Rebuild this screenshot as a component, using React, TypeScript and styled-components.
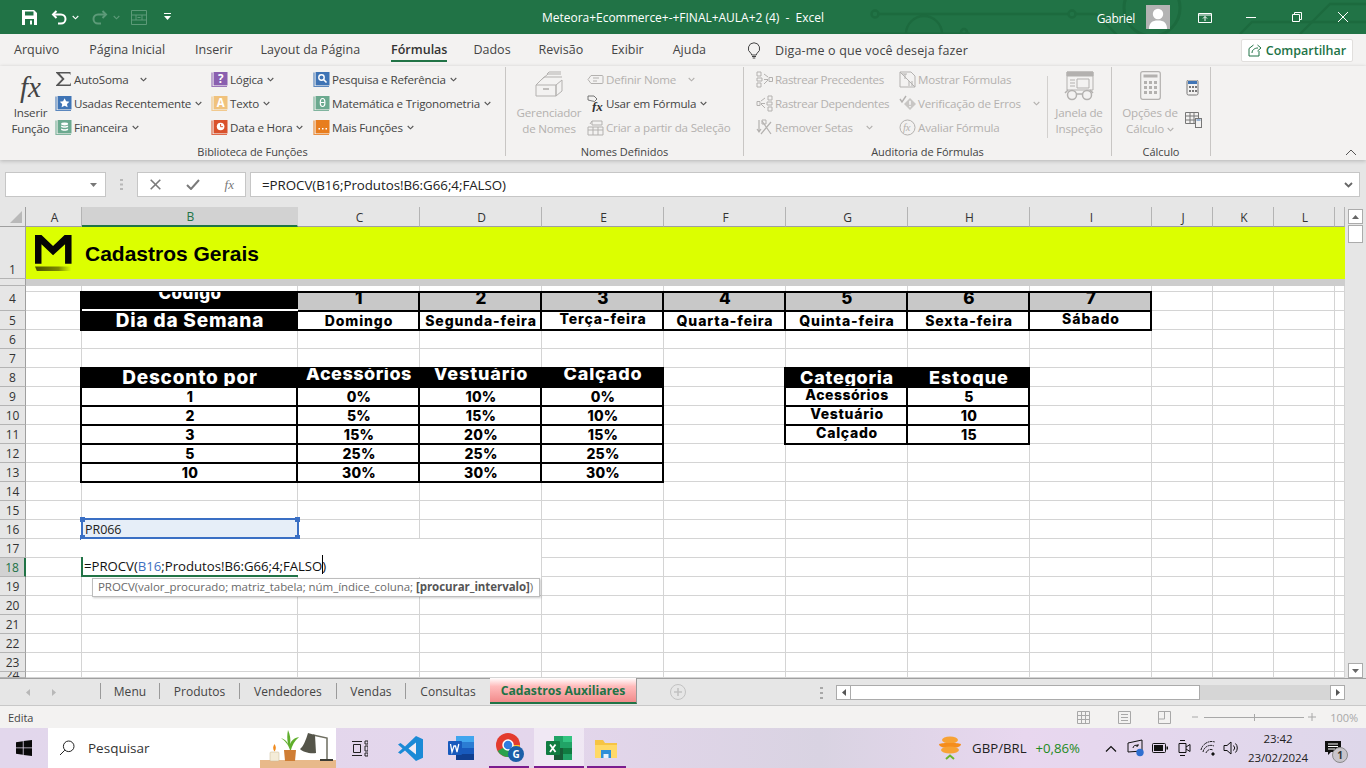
import React from 'react';
import styled, { createGlobalStyle } from 'styled-components';

const UI = `"Open Sans", "Noto Sans", sans-serif`;
const BOLD = `Inter, "Liberation Sans", sans-serif`;
const GRID = '#d4d4d4';
const DIS = '#b3b1af';

const Global = createGlobalStyle`
  *, *::before, *::after { box-sizing: border-box; }
  html, body { margin: 0; padding: 0; width: 1366px; height: 768px; overflow: hidden; background: #fff; }
  svg { display: block; flex: none; }
`;

const Page = styled.div`
  width: 1366px; height: 768px; display: flex; flex-direction: column; overflow: hidden;
  font-family: ${UI}; color: #444; position: relative;
`;

/* ---------- title bar ---------- */
const TitleBar = styled.header`
  height: 34px; flex: none; background: #217346; color: #fff; display: flex; align-items: center;
  position: relative; font-size: 12px; letter-spacing: -0.02px;
`;
const Qat = styled.div`width: 542px; padding-left: 22px; display: flex; align-items: center; flex: none;`;
const QatSlot = styled.span<{ $ml?: number }>`margin-left: ${p => p.$ml ?? 0}px; display: block;`;
const DocTitle = styled.div`white-space: pre; position: relative;`;
const UserArea = styled.div`margin-left: auto; display: flex; align-items: center; position: relative;`;
const UserName = styled.span`margin-right: 11px; padding-top: 2px; letter-spacing: -0.3px;`;
const Avatar = styled.div`width: 24px; height: 24px; background: #b3b3b3; margin-right: 12px; overflow: hidden;`;
const WinBtn = styled.div`width: 46px; height: 34px; display: flex; align-items: center; justify-content: center;`;
const Circuit = styled.svg`position: absolute; left: 860px; top: 0;`;

/* ---------- ribbon ---------- */
const TabRow = styled.nav`
  height: 32px; flex: none; background: #f3f2f1; display: flex; align-items: center; padding: 0 13px 0 14px;
  font-size: 12.5px; color: #444;
`;
const RibbonTab = styled.div<{ $active?: boolean; $mr?: number }>`
  height: 32px; line-height: 31px; margin-right: ${p => p.$mr ?? 30}px; position: relative; white-space: nowrap; flex: none;
  ${p => p.$active ? `
    font-weight: 600; color: #333;
    &::after { content: ''; position: absolute; left: 0; right: 0; bottom: 4px; height: 2px; background: #217346; }
  ` : ''}
`;
const TellMe = styled.div`display: flex; align-items: center; gap: 14px; margin-left: 11px; white-space: nowrap; letter-spacing: .15px;`;
const ShareBtn = styled.div`
  margin-left: auto; width: 112px; height: 23px; background: #fff; border: 1px solid #e1dfdd; border-radius: 2px;
  display: flex; align-items: center; justify-content: center; gap: 4px; color: #217346; font-weight: 600; font-size: 12.5px;
`;
const Ribbon = styled.section`
  height: 94px; flex: none; background: #f3f2f1; display: flex; position: relative; z-index: 2;
  box-shadow: 0 1px 4px rgba(0,0,0,.22); font-size: 11.6px; letter-spacing: -0.2px;
`;
const Group = styled.div<{ $w: number }>`
  width: ${p => p.$w}px; flex: none; height: 89px; margin-top: 1px; display: flex; flex-direction: column;
  border-right: 1px solid #c8c6c4;
`;
const GroupBody = styled.div<{ $pl?: number }>`flex: 1; display: flex; padding-left: ${p => p.$pl ?? 0}px;`;
const GroupLabel = styled.div`height: 11px; text-align: center; font-size: 11px; color: #444; line-height: 13px; letter-spacing: -0.05px;`;
const Col = styled.div<{ $w?: number }>`display: flex; flex-direction: column; width: ${p => p.$w ? `${p.$w}px` : 'auto'}; flex: none;`;
const Small = styled.div<{ $off?: boolean; $tight?: boolean }>`
  height: 24px; display: flex; align-items: center; gap: 2px; white-space: nowrap; color: ${p => p.$off ? DIS : '#444'};
  ${p => p.$tight ? 'letter-spacing: -0.35px;' : ''}
`;
const IconBox = styled.span`width: 17px; height: 18px; display: flex; align-items: center; justify-content: center; flex: none;`;
const ChevWrap = styled.span<{ $ml?: number }>`margin-left: ${p => p.$ml ?? 2}px; display: block;`;
const Large = styled.div<{ $w: number; $off?: boolean }>`
  width: ${p => p.$w}px; flex: none; display: flex; flex-direction: column; align-items: center; text-align: center;
  line-height: 16px; color: ${p => p.$off ? DIS : '#444'};
`;
const LargeIcon = styled.div`height: 38px; padding-top: 4px; display: flex; align-items: flex-start; justify-content: center;`;
const LabelLine = styled.span`display: flex; align-items: center; gap: 3px;`;
const FxGlyph = styled.span`
  font-family: "Liberation Serif", serif; font-style: italic; font-size: 29px; line-height: 32px; color: #444; letter-spacing: 0;
`;
const FxSmall = styled(FxGlyph)`font-size: 13px; line-height: 14px; color: #777;`;
const InnerSep = styled.div`width: 1px; height: 62px; background: #d2d0ce; margin: 9px 0 0 0; flex: none;`;
const Collapse = styled.svg`position: absolute; right: 9px; bottom: 4px;`;
const CalcStack = styled(Col)`padding-top: 13px; gap: 16px;`;

/* ---------- formula bar ---------- */
const FormulaBar = styled.div`
  height: 47px; flex: none; background: #e6e6e6; padding: 12px 6px 10px 5px; display: flex; align-items: stretch;
`;
const Field = styled.div`background: #fff; border: 1px solid #c6c6c6; display: flex; align-items: center;`;
const NameBox = styled(Field)`width: 101px; justify-content: flex-end; padding-right: 8px;`;
const Grip = styled.div`width: 31px; display: flex; align-items: center; justify-content: center;`;
const FxButtons = styled(Field)`width: 109px; justify-content: space-between; padding: 0 11px 0 12px;`;
const Input = styled(Field)`
  flex: 1; margin-left: 4px; padding: 0 6px 0 11px; justify-content: space-between; font-size: 13.35px; color: #222; letter-spacing: -0.05px;
`;

/* ---------- sheet ---------- */
const SheetWrap = styled.main`flex: none; height: 471px; display: flex; background: #e6e6e6;`;
const SheetArea = styled.div`width: 1345px; height: 471px; position: relative; overflow: hidden; flex: none;`;
const TEMPLATE = '26px 56px 216px repeat(7, 122px) repeat(3, 61px) 10px';
const ColHead = styled.div`display: grid; grid-template-columns: ${TEMPLATE}; height: 20px; background: #e6e6e6;`;
const ColCell = styled.div<{ $sel?: boolean }>`
  display: flex; align-items: center; justify-content: center; font-size: 12px; padding: 1px 0 0 2px;
  color: ${p => p.$sel ? '#217346' : '#333'}; background: ${p => p.$sel ? '#d2d2d2' : '#e6e6e6'};
  border-right: 1px solid ${p => p.$sel ? '#d2d2d2' : '#b4b4b4'};
  border-bottom: 1px solid #9f9f9f;
  ${p => p.$sel ? 'border-bottom: 2px solid #217346;' : ''}
`;
const Corner = styled.div`
  background: #e6e6e6; border-right: 1px solid #9f9f9f; border-bottom: 1px solid #9f9f9f; position: relative;
  &::after { content: ''; position: absolute; right: 3px; bottom: 3px; width: 12px; height: 12px; background: #b9b9b9; clip-path: polygon(100% 0, 100% 100%, 0 100%); }
`;
const Row = styled.div<{ $h: number }>`display: grid; grid-template-columns: ${TEMPLATE}; height: ${p => p.$h}px; background: #fff;`;
const RowHead = styled.div<{ $sel?: boolean; $bare?: boolean; $end?: 'bottom' | 'up' }>`
  background: ${p => p.$sel ? '#d2d2d2' : '#e6e6e6'}; color: ${p => p.$sel ? '#217346' : '#333'};
  border-right: ${p => p.$sel ? '2px solid #217346' : '1px solid #9f9f9f'};
  border-bottom: ${p => p.$bare ? 'none' : '1px solid #b4b4b4'};
  font-size: 12px; display: flex; align-items: ${p => p.$end === 'bottom' ? 'flex-end' : 'center'}; justify-content: center;
  overflow: hidden; line-height: 15px;
  padding-bottom: ${p => p.$end === 'bottom' ? '1px' : '0'};
`;
type V = 'black' | 'white' | 'gray' | 'split';
const Cell = styled.div<{ $v?: V; $fs?: number; $ls?: number }>`
  border-right: 1px solid ${GRID}; border-bottom: 1px solid ${GRID}; overflow: hidden; position: relative;
  display: flex; align-items: center; justify-content: center; white-space: nowrap;
  font-family: ${BOLD}; font-weight: 800; font-size: ${p => p.$fs ?? 14}px; line-height: 17px; color: #000; letter-spacing: ${p => p.$ls ?? 0.25}px;
  ${p => p.$v ? `z-index: 1; border: none; box-shadow: -1px 0 0 1px #000, inset -2px 0 0 #000, inset 0 1px 0 #000, inset 0 -1px 0 #000;` : ''}
  ${p => p.$v === 'black' ? 'background: #000; color: #fff;' : ''}
  ${p => p.$v === 'white' ? 'background: #fff;' : ''}
  ${p => p.$v === 'gray' ? 'background: #c8c8c8;' : ''}
  ${p => p.$v === 'split' ? 'background: #000; color: #fff; z-index: 2; box-shadow: -1px 0 0 1px #000; border-bottom: 2px solid #fff;' : ''}
`;
const Lift = styled.span<{ $dy?: number }>`display: block; transform: translateY(${p => p.$dy ?? 0}px);`;
const Banner = styled.div`
  grid-column: 2 / -1; background: #dcff00; display: flex; align-items: center; padding: 0 0 0 9px; gap: 13px;
`;
const BannerTitle = styled.div`
  font-family: "Liberation Sans", Arial, sans-serif; font-weight: 700; font-size: 21px; color: #000; margin-top: 1px;
`;
const Band = styled.div`grid-column: 2 / -1; background: #cdcdcd;`;

/* overlays on the grid */
const RangeBox = styled.div`
  position: absolute; left: 81px; top: 311px; width: 218px; height: 21px; border: 2px solid #3a6fc4; background: rgba(214,226,244,.6);
  display: flex; align-items: center; padding: 1px 0 0 2px; font-size: 12.5px; color: #222; letter-spacing: -0.05px; z-index: 3;
`;
const Handle = styled.i<{ $x: 'l' | 'r'; $y: 't' | 'b' }>`
  position: absolute; width: 5px; height: 5px; background: #3a6fc4;
  ${p => p.$x === 'l' ? 'left: -3px;' : 'right: -3px;'} ${p => p.$y === 't' ? 'top: -3px;' : 'bottom: -3px;'}
`;
const EditBox = styled.div`
  position: absolute; left: 81px; top: 332px; width: 460px; height: 38px; background: #fff; z-index: 3;
`;
const EditLine = styled.div`
  position: absolute; left: 0; top: 18px; height: 20px; width: 217px; border-left: 2px solid #217346; border-bottom: 2px solid #217346;
  padding-left: 1px; font-size: 13.2px; line-height: 19px; color: #111; white-space: nowrap; letter-spacing: -0.02px;
`;
const RefText = styled.span`color: #3d6fc0;`;
const Caret = styled.span`
  display: inline-block; width: 1px; height: 19px; background: #000; vertical-align: top; margin-top: -2px; margin-right: -1px;
`;
const Tip = styled.div`
  position: absolute; left: 92px; top: 371px; height: 19px; padding: 0 6px 0 5px; background: #fff; border: 1px solid #bdbdbd; z-index: 4;
  box-shadow: 1px 1px 2px rgba(0,0,0,.2); font-size: 11.5px; line-height: 16px; color: #6a6a6a; white-space: nowrap; letter-spacing: -0.06px;
`;
const TipStrong = styled.b`color: #555;`;

const VScroll = styled.aside`width: 21px; flex: none; padding: 2px 0 0 3px; display: flex; flex-direction: column;`;
const ScrollBtn = styled.div`
  width: 15px; height: 15px; background: #fff; border: 1px solid #ababab; display: flex; align-items: center; justify-content: center;
`;
const VThumb = styled.div`width: 15px; height: 18px; margin-top: 1px; background: #fff; border: 1px solid #ababab;`;
const VTrack = styled.div`flex: 1;`;

/* ---------- sheet tabs ---------- */
const TabBar = styled.div`
  height: 28px; flex: none; background: #e6e6e6; border-top: 1px solid #a0a0a0; border-bottom: 1px solid #c8c8c8; display: flex; position: relative;
`;
const TabNav = styled.div`width: 100px; flex: none; display: flex; align-items: center; padding-left: 26px; gap: 22px;`;
const SheetTab = styled.div<{ $w: number }>`
  width: ${p => p.$w}px; flex: none; height: 16px; margin-top: 4px; border-left: 1px solid #9a9a9a;
  display: flex; align-items: center; justify-content: center; font-size: 12px; color: #444; letter-spacing: .05px;
`;
const ActiveTab = styled.div`
  width: 147px; flex: none; height: 26px; margin-top: -1px; background: linear-gradient(#ffffff 0%, #fbb 35%, #f28b8b 100%);
  border-bottom: 2px solid #217346; border-right: 1px solid #9a9a9a;
  display: flex; align-items: center; justify-content: center; font-size: 12.2px; font-weight: 700; color: #217346; letter-spacing: 0;
`;
const AddSheet = styled.div`width: 42px; padding-left: 33px; flex: none; display: flex; align-items: center;`;
const HScrollZone = styled.div`margin-left: auto; width: 546px; padding: 6px 21px 0 0; display: flex; align-items: flex-start;`;
const DotGrip = styled.div`width: 16px; padding-top: 2px;`;
const HThumb = styled.div`width: 349px; height: 15px; background: #fff; border: 1px solid #ababab; border-left: none;`;
const HTrack = styled.div`flex: 1; height: 15px; background: #d6d6d6;`;

/* ---------- status bar ---------- */
const StatusBar = styled.footer`
  height: 22px; flex: none; background: #f3f2f1; display: flex; align-items: center; padding: 0 8px; font-size: 11px; color: #444; letter-spacing: -0.05px;
`;
const StatusRight = styled.div`margin-left: auto; display: flex; align-items: center; color: #a8a8a8;`;
const ViewBtn = styled.span<{ $mr: number }>`margin-right: ${p => p.$mr}px; display: block;`;
const Zoom = styled.div`width: 100px; height: 1px; background: #a8a8a8; margin: 0 3px 0 4px; position: relative;
  &::after { content: ''; position: absolute; left: 50%; top: -3px; width: 1px; height: 7px; background: #a8a8a8; }
`;
const ZoomPct = styled.span`margin-left: 13px;`;

/* ---------- taskbar ---------- */
const Taskbar = styled.div`
  height: 40px; flex: none; display: flex; align-items: stretch; color: #111; font-size: 12px;
  background: linear-gradient(90deg, #e2d7ec 0%, #e4d6ec 40%, #d9d3e2 60%, #e8d7ef 75%, #ded7ea 100%);
`;
const StartBtn = styled.div`width: 48px; display: flex; align-items: center; justify-content: center; flex: none;`;
const Search = styled.div`
  width: 288px; flex: none; background: #fff; display: flex; align-items: center; padding-left: 11px; gap: 13px;
  position: relative; font-size: 13.5px; color: #333;
`;
const SearchArt = styled.svg`position: absolute; right: 0; bottom: 0;`;
const Tasks = styled.div`display: flex; align-items: stretch; padding-left: 0; flex: none;`;
const TaskSlot = styled.div<{ $w: number; $on?: boolean; $l?: number; $r?: number; $open?: boolean }>`
  width: ${p => p.$w}px; flex: none; display: flex; align-items: center; justify-content: center; position: relative;
  background: ${p => p.$on ? 'rgba(255,255,255,.45)' : 'transparent'};
  ${p => p.$open ? `&::after { content: ''; position: absolute; left: ${p.$l ?? 0}px; right: ${p.$r ?? 0}px; bottom: 0; height: 2px; background: #7b1c8e; }` : ''}
`;
const Tray = styled.div`margin-left: auto; display: flex; align-items: center; flex: none; padding-right: 14px;`;
const Ticker = styled.div`display: flex; align-items: center; font-size: 13.2px; color: #222;`;
const CoinWrap = styled.span`margin-right: 10px; display: block;`;
const Gain = styled.span`color: #1d8a22; margin-left: 9px;`;
const TraySlot = styled.span<{ $w: number; $pl?: number }>`
  width: ${p => p.$w}px; padding-left: ${p => p.$pl ?? 0}px; display: flex; justify-content: center;
`;
const Clock = styled.div`width: 72px; text-align: center; font-size: 11.5px; line-height: 19px; color: #222; letter-spacing: -0.1px; white-space: nowrap;`;
const Notify = styled.div`width: 38px; height: 40px; position: relative; display: flex; align-items: center; justify-content: center;`;
const NotifyBadge = styled.span`
  position: absolute; left: 18px; top: 19px; width: 16px; height: 16px; border-radius: 50%; background: #c9c5cc; border: 1px solid #8a8a8a;
  font-size: 10px; font-weight: 700; color: #333; line-height: 14px; text-align: center;
`;

/* ---------- icons ---------- */
const Chev = ({ c = '#555' }: { c?: string }) => (
  <svg width="7" height="5" viewBox="0 0 7 5"><path d="M.7 1 3.500 3.800 6.300 1" fill="none" stroke={c} strokeWidth="1.100" /></svg>
);
const Book = ({ c, children }: { c: string; children?: React.ReactNode }) => (
  <svg width="17" height="17" viewBox="0 0 17 17">
    <path d="M1 1.500V15.500H16" fill="none" stroke={c} strokeWidth="1.200" opacity=".85" />
    <rect x="2.600" y="1" width="13.900" height="13.400" fill={c} />
    {children}
  </svg>
);
const Glyph = ({ t }: { t: string }) => (
  <text x="9.600" y="12.400" fontFamily="Open Sans, sans-serif" fontWeight="700" fontSize="11.500" fill="#fff" textAnchor="middle">{t}</text>
);
const Sigma = () => <svg width="17" height="16" viewBox="0 0 17 16"><path d="M1 1h14.500v3l-1-1.600H4.600L9.600 8l-5.400 5.600h10.600l1-2V15H1v-.8L7 8 1 1.800z" fill="#555" /></svg>;

const DIcon = ({ children, w = 17, h = 17, vb }: { children: React.ReactNode; w?: number; h?: number; vb?: string }) => (
  <svg width={w} height={h} viewBox={vb ?? `0 0 ${w} ${h}`} fill="none" stroke={DIS} strokeWidth="1">{children}</svg>
);
const NameTag = () => <DIcon><path d="M4 4.500h11a1 1 0 0 1 1 1v6a1 1 0 0 1-1 1H4L1 8.500z" /><path d="M6 7h6M6 10h4" /></DIcon>;
const FxTag = () => (
  <svg width="17" height="17" viewBox="0 0 17 17" fill="none">
    <path d="M1 1h6l3 3-2.500 2.500L1 5z" stroke="#666" strokeWidth=".9" />
    <text x="5" y="16" fontFamily="Liberation Serif, serif" fontStyle="italic" fontWeight="700" fontSize="13" fill="#333">fx</text>
  </svg>
);
const FromSel = () => <DIcon><path d="M1 8h15v8H1zM1 11h15M6 8v8M11 8v8" /><path d="M5 2h10v4H5z" /><path d="M3 5l2-3" /></DIcon>;
const TracePre = () => <DIcon><path d="M1 1h4v4H1zM1 12h4v4H1zM1 7h5v3H1z" /><path d="M8 3l4 3M8 13l4-4M8 8.500h4" /><path d="M13 6.500h3.500v4H13z" /></DIcon>;
const TraceDep = () => <DIcon><path d="M12 1h4v4h-4zM12 12h4v4h-4zM11 7h5v3h-5z" /><path d="M9 3 5 6M9 13 5 9M9 8.500H5" /><path d="M1 6.500h3v4H1z" /></DIcon>;
const RemoveArrows = () => <DIcon><path d="M3 1v11M1 10l2 3 2-3M6 2l9 13M15 3l-10 12" strokeWidth="1.200" /><path d="M6 1h4v4H6z" /></DIcon>;
const ShowFx = () => <DIcon><path d="M1 1h11l4 4v11H1z" /><path d="M1 1l15 15" /><path d="M6 3v5M3 3h5M10 10v5M13 10v5" /></DIcon>;
const ErrCheck = () => (
  <svg width="18" height="17" viewBox="0 0 18 17" fill="none">
    <path d="M1 4l2 3 4-6" stroke={DIS} strokeWidth="1.400" />
    <path d="M11 3l6 6-6 6-6-6z" fill="#c8c6c4" /><path d="M11 5.800v4M11 11v1.300" stroke="#fff" strokeWidth="1.300" />
  </svg>
);
const EvalFx = () => (
  <svg width="17" height="17" viewBox="0 0 17 17" fill="none"><circle cx="8.500" cy="8.500" r="7.500" stroke={DIS} />
    <text x="4" y="12" fontFamily="Liberation Serif, serif" fontStyle="italic" fontSize="10.500" fill={DIS} stroke="none">fx</text>
  </svg>
);

const App = () => {
  const colLetters = ['A', 'B', 'C', 'D', 'E', 'F', 'G', 'H', 'I', 'J', 'K', 'L', 'M'];
  type C = { t: string; v: V; fs?: number; dy?: number; ls?: number };
  const w = (t: string, fs = 14, dy = 0, ls = 0.25): C => ({ t, v: 'white', fs, dy, ls });
  const day = (t: string, dy = 0): C => w(t, 14, dy, 0.9);
  const b = (t: string, fs = 18, dy = 0, ls = 0.5): C => ({ t, v: 'black', fs, dy, ls });
  const rowMap: Record<number, Record<number, C>> = {
    4: { 1: { t: 'Código', v: 'split', fs: 17, dy: -7, ls: 0.5 }, ...Object.fromEntries([1, 2, 3, 4, 5, 6, 7].map(n => [n + 1, { t: String(n), v: 'gray' as V, fs: 17, dy: -3 }])) },
    5: { 1: b('Dia da Semana', 19, 0, 0.8), 2: day('Domingo'), 3: day('Segunda-feira'), 4: day('Terça-feira', -2), 5: day('Quarta-feira'), 6: day('Quinta-feira'), 7: day('Sexta-feira'), 8: day('Sábado', -2) },
    8: { 1: b('Desconto por', 19, 0, 0.8), 2: b('Acessórios', 18, -4), 3: b('Vestuário', 18, -4, 0.9), 4: b('Calçado', 18, -4, 0.8), 6: b('Categoria', 18, 0, 0.7), 7: b('Estoque', 18, 0, 1) },
    9: { 1: w('1'), 2: w('0%'), 3: w('10%'), 4: w('0%'), 6: w('Acessórios', 14, -2, 0.5), 7: w('5') },
    10: { 1: w('2'), 2: w('5%'), 3: w('15%'), 4: w('10%'), 6: w('Vestuário', 14, -2, 0.7), 7: w('10') },
    11: { 1: w('3'), 2: w('15%'), 3: w('20%'), 4: w('15%'), 6: w('Calçado', 14, -2, 0.7), 7: w('15') },
    12: { 1: w('5'), 2: w('25%'), 3: w('25%'), 4: w('25%') },
    13: { 1: w('10'), 2: w('30%'), 3: w('30%'), 4: w('30%') },
  };
  const numbered = [4, 5, 6, 7, 8, 9, 10, 11, 12, 13, 14, 15, 16, 17, 18, 19, 20, 21, 22, 23, 24];
  return (
    <Page>
      <Global />
      <TitleBar>
        <Circuit width="506" height="34" viewBox="0 0 506 34" fill="none" stroke="#1c6a3e" strokeWidth="2.400">
          <circle cx="15" cy="14" r="3.500" /><path d="M19 14h190" /><circle cx="212" cy="14" r="3.500" /><path d="M216 14h20l22 22" />
          <path d="M0 34h110" strokeWidth="3" /><circle cx="64" cy="34" r="18" /><circle cx="104" cy="32" r="3" />
          <circle cx="292" cy="8" r="28" strokeWidth="3" /><path d="M380 34l12-12h114" /><path d="M440 34l30-30h36" />
        </Circuit>
        <Qat>
          <QatSlot>
            <svg width="15" height="15" viewBox="0 0 15 15"><path d="M0 0h12l3 3v12H0z" fill="#fff" /><path d="M3 1.500h8.500v4H3z" fill="#217346" /><path d="M3 9h9v6H3z" fill="#217346" /><path d="M8 10.500h2v4H8z" fill="#fff" /></svg>
          </QatSlot>
          <QatSlot $ml={14}>
            <svg width="16" height="15" viewBox="0 0 16 15" fill="none" stroke="#fff" strokeWidth="2"><path d="M5.500 1 2 4.500 5.500 8" /><path d="M2 4.500h8a4.500 4.500 0 0 1 0 9H7" /></svg>
          </QatSlot>
          <QatSlot $ml={5}><Chev c="#fff" /></QatSlot>
          <QatSlot $ml={13}>
            <svg width="16" height="15" viewBox="0 0 16 15" fill="none" stroke="#5c9a78" strokeWidth="2"><path d="M10.500 1 14 4.500 10.500 8" /><path d="M14 4.500H6a4.500 4.500 0 0 0 0 9h3" /></svg>
          </QatSlot>
          <QatSlot $ml={5}><Chev c="#5c9a78" /></QatSlot>
          <QatSlot $ml={11}>
            <svg width="16" height="15" viewBox="0 0 16 15" fill="none" stroke="#5c9a78"><path d="M.5.500h15v14H.5zM.5 5h15M.5 10h15M5 5v5M11 5v5M6.500 7.500h3" /></svg>
          </QatSlot>
          <QatSlot $ml={17}>
            <svg width="7" height="8" viewBox="0 0 7 8"><path d="M0 0h7v1H0z M0 3h7L3.500 7z" fill="#fff" /></svg>
          </QatSlot>
        </Qat>
        <DocTitle>{'Meteora+Ecommerce+-+FINAL+AULA+2 (4)  -  Excel'}</DocTitle>
        <UserArea>
          <UserName>Gabriel</UserName>
          <Avatar>
            <svg width="24" height="24" viewBox="0 0 24 24"><circle cx="12" cy="9" r="5.200" fill="#fff" /><path d="M3 24c0-6 3-8.500 9-8.500s9 2.500 9 8.500z" fill="#fff" /></svg>
          </Avatar>
          <WinBtn><svg width="14" height="11" viewBox="0 0 14 11" fill="none" stroke="#fff"><path d="M.5 1.500h13v9H.5zM.5 3h13" /><path d="M7 9V4.500M5 6.500l2-2 2 2" /></svg></WinBtn>
          <WinBtn><svg width="10" height="1" viewBox="0 0 10 1"><path d="M0 .5h10" stroke="#fff" /></svg></WinBtn>
          <WinBtn><svg width="10" height="10" viewBox="0 0 10 10" fill="none" stroke="#fff"><path d="M.5 2.500h7v7h-7zM2.500 2.500v-2h7v7h-2" /></svg></WinBtn>
          <WinBtn><svg width="10" height="10" viewBox="0 0 10 10"><path d="M0 0l10 10M10 0 0 10" stroke="#fff" /></svg></WinBtn>
        </UserArea>
      </TitleBar>

      <TabRow>
        <RibbonTab>Arquivo</RibbonTab>
        <RibbonTab>Página Inicial</RibbonTab>
        <RibbonTab $mr={28}>Inserir</RibbonTab>
        <RibbonTab $mr={31}>Layout da Página</RibbonTab>
        <RibbonTab $active $mr={26}>Fórmulas</RibbonTab>
        <RibbonTab $mr={28}>Dados</RibbonTab>
        <RibbonTab $mr={28}>Revisão</RibbonTab>
        <RibbonTab $mr={29}>Exibir</RibbonTab>
        <RibbonTab>Ajuda</RibbonTab>
        <TellMe>
          <svg width="14" height="17" viewBox="0 0 14 17" fill="none" stroke="#444"><path d="M7 .8a5.700 5.700 0 0 0-3.200 10.400c.6.500.8 1 .9 1.800h4.600c.1-.8.3-1.300.9-1.800A5.700 5.700 0 0 0 7 .8z" /><path d="M5 14.500h4M5.700 16h2.600" /></svg>
          Diga-me o que você deseja fazer
        </TellMe>
        <ShareBtn>
          <svg width="14" height="14" viewBox="0 0 14 14" fill="none" stroke="#217346"><path d="M1 5.500V13h10V8" /><path d="M1 5.500 5.500 2" /><path d="M4 10c0-3 2.500-5 6-5M9.500 2 13 5l-3.500 3" /></svg>
          Compartilhar
        </ShareBtn>
      </TabRow>

      <Ribbon>
        <Group $w={506}>
          <GroupBody $pl={6}>
            <Large $w={49}>
              <LargeIcon><FxGlyph>fx</FxGlyph></LargeIcon>
              Inserir<br />Função
            </Large>
            <Col $w={156}>
              <Small><IconBox><Sigma /></IconBox>AutoSoma<ChevWrap $ml={10}><Chev /></ChevWrap></Small>
              <Small><IconBox><Book c="#3f74b5"><path d="M9.600 3.200l1.500 3.100 3.300.4-2.400 2.300.6 3.300-3-1.600-3 1.600.6-3.300-2.400-2.300 3.300-.4z" fill="#fff" /></Book></IconBox>Usadas Recentemente<ChevWrap><Chev /></ChevWrap></Small>
              <Small><IconBox><Book c="#6ba98f"><ellipse cx="9.600" cy="5" rx="3.500" ry="1.400" fill="#fff" /><path d="M6.100 6.500c1 1 6 1 7 0v1.500c-1 1-6 1-7 0zM6.100 9.500c1 1 6 1 7 0v1.500c-1 1-6 1-7 0z" fill="#fff" /></Book></IconBox>Financeira<ChevWrap><Chev /></ChevWrap></Small>
            </Col>
            <Col $w={102}>
              <Small><IconBox><Book c="#8a5fb0"><Glyph t="?" /></Book></IconBox>Lógica<ChevWrap><Chev /></ChevWrap></Small>
              <Small><IconBox><Book c="#f0c27c"><Glyph t="A" /></Book></IconBox>Texto<ChevWrap><Chev /></ChevWrap></Small>
              <Small><IconBox><Book c="#d9512c"><circle cx="9.600" cy="7.500" r="3.800" fill="#fff" /><path d="M9.600 5v2.700h2.300" fill="none" stroke="#d9512c" /></Book></IconBox>Data e Hora<ChevWrap><Chev /></ChevWrap></Small>
            </Col>
            <Col>
              <Small><IconBox><Book c="#3f74b5"><circle cx="8.500" cy="6.500" r="2.700" fill="none" stroke="#fff" strokeWidth="1.400" /><path d="M10.500 8.500l3 3" stroke="#fff" strokeWidth="1.600" /></Book></IconBox>Pesquisa e Referência<ChevWrap><Chev /></ChevWrap></Small>
              <Small><IconBox><Book c="#6ba98f"><ellipse cx="9.600" cy="7.500" rx="2.300" ry="4" fill="none" stroke="#fff" strokeWidth="1.200" /><path d="M7.500 7.500h4.200" stroke="#fff" /></Book></IconBox>Matemática e Trigonometria<ChevWrap><Chev /></ChevWrap></Small>
              <Small><IconBox><Book c="#e87d1e"><path d="M5.500 9h1.500v1.500H5.500zM9 9h1.500v1.500H9zM12.500 9H14v1.500h-1.500z" fill="#fff" /></Book></IconBox>Mais Funções<ChevWrap><Chev /></ChevWrap></Small>
            </Col>
          </GroupBody>
          <GroupLabel>Biblioteca de Funções</GroupLabel>
        </Group>

        <Group $w={238}>
          <GroupBody $pl={5}>
            <Large $w={76} $off>
              <LargeIcon>
                <svg width="30" height="28" viewBox="0 0 30 28" fill="none" stroke={DIS}>
                  <path d="M2 14h20v11H2zM22 14l6-5v11l-6 5zM2 14 10 6h18" /><path d="M7 9l7-6h13M13 3l2-2h12" /><path d="M9 18h6" strokeWidth="1.600" />
                </svg>
              </LargeIcon>
              Gerenciador<br />de Nomes
            </Large>
            <Col>
              <Small $off><IconBox><NameTag /></IconBox>Definir Nome<ChevWrap $ml={10}><Chev c={DIS} /></ChevWrap></Small>
              <Small><IconBox><FxTag /></IconBox>Usar em Fórmula<ChevWrap><Chev /></ChevWrap></Small>
              <Small $off><IconBox><FromSel /></IconBox>Criar a partir da Seleção</Small>
            </Col>
          </GroupBody>
          <GroupLabel>Nomes Definidos</GroupLabel>
        </Group>

        <Group $w={368}>
          <GroupBody $pl={12}>
            <Col $w={143}>
              <Small $off $tight><IconBox><TracePre /></IconBox>Rastrear Precedentes</Small>
              <Small $off $tight><IconBox><TraceDep /></IconBox>Rastrear Dependentes</Small>
              <Small $off><IconBox><RemoveArrows /></IconBox>Remover Setas<ChevWrap $ml={11}><Chev c={DIS} /></ChevWrap></Small>
            </Col>
            <Col $w={148}>
              <Small $off><IconBox><ShowFx /></IconBox>Mostrar Fórmulas</Small>
              <Small $off><IconBox><ErrCheck /></IconBox>Verificação de Erros<ChevWrap $ml={10}><Chev c={DIS} /></ChevWrap></Small>
              <Small $off><IconBox><EvalFx /></IconBox>Avaliar Fórmula</Small>
            </Col>
            <InnerSep />
            <Large $w={62} $off>
              <LargeIcon>
                <svg width="30" height="30" viewBox="0 0 30 30" fill="none" stroke={DIS}>
                  <path d="M3 1h26v18H3z" /><path d="M3 1h26v4H3z" fill={DIS} /><path d="M6 9h5M6 12h5M6 15h5M13 8h12v9H13z" />
                  <circle cx="8" cy="24" r="4.500" strokeWidth="1.500" /><circle cx="23" cy="24" r="4.500" strokeWidth="1.500" /><path d="M12.500 23h6M1 22l3-3M29 22l-3-3" strokeWidth="1.500" />
                </svg>
              </LargeIcon>
              Janela de<br />Inspeção
            </Large>
          </GroupBody>
          <GroupLabel>Auditoria de Fórmulas</GroupLabel>
        </Group>

        <Group $w={99}>
          <GroupBody $pl={3}>
            <Large $w={70} $off>
              <LargeIcon>
                <svg width="21" height="29" viewBox="0 0 21 29" fill="none"><rect x=".7" y=".7" width="19.600" height="27.600" rx="2" stroke={DIS} strokeWidth="1.200" /><path d="M3.500 3.500h14v3h-14z" fill={DIS} /><path d="M4 10h3v3H4zM9 10h3v3H9zM14 10h3v3h-3zM4 15h3v3H4zM9 15h3v3H9zM14 15h3v3h-3zM4 20h3v3H4zM9 20h3v3H9zM14 20h3v3h-3z" fill={DIS} /></svg>
              </LargeIcon>
              <span>Opções de</span>
              <LabelLine>Cálculo <Chev c={DIS} /></LabelLine>
            </Large>
            <CalcStack>
              <svg width="18" height="16" viewBox="0 7 18 16" fill="none">
                <rect x="2" y="7" width="11" height="15" rx="1.500" stroke="#777" /><path d="M3 8h9v3H3z" fill="#3f74b5" /><path d="M4 13h2v2H4zM7 13h2v2H7zM10 13h2v2h-2zM4 17h2v2H4zM7 17h2v2H7zM10 17h2v2h-2z" fill="#777" />
              </svg>
              <svg width="17" height="16" viewBox="0 0 17 16" fill="none" stroke="#777">
                <path d="M.5.500h13v11H.5zM.5 4h13M.5 8h13M5 .5v11M9 .5v11" /><rect x="10.500" y="6.500" width="6" height="9" fill="#f3f2f1" /><path d="M11.500 8h4" stroke="#3f74b5" />
              </svg>
            </CalcStack>
          </GroupBody>
          <GroupLabel>Cálculo</GroupLabel>
        </Group>
        <Collapse width="12" height="7" viewBox="0 0 12 7"><path d="M1 6l5-5 5 5" fill="none" stroke="#555" /></Collapse>
      </Ribbon>

      <FormulaBar>
        <NameBox><svg width="7" height="4" viewBox="0 0 7 4"><path d="M0 0h7L3.500 4z" fill="#777" /></svg></NameBox>
        <Grip><svg width="3" height="11" viewBox="0 0 3 11"><path d="M0 0h3v2H0zM0 4.500h3v2H0zM0 9h3v2H0z" fill="#b8b8b8" /></svg></Grip>
        <FxButtons>
          <svg width="11" height="11" viewBox="0 0 11 11"><path d="M.7.700l9.600 9.600M10.300.700.700 10.300" stroke="#7a7a7a" strokeWidth="1.600" /></svg>
          <svg width="14" height="11" viewBox="0 0 14 11"><path d="M1 6l4 4L13 1" fill="none" stroke="#7a7a7a" strokeWidth="2" /></svg>
          <FxSmall>fx</FxSmall>
        </FxButtons>
        <Input>
          =PROCV(B16;Produtos!B6:G66;4;FALSO)
          <svg width="9" height="6" viewBox="0 0 9 6"><path d="M1 1l3.500 3.500L8 1" fill="none" stroke="#666" strokeWidth="1.800" /></svg>
        </Input>
      </FormulaBar>

      <SheetWrap>
        <SheetArea>
          <ColHead>
            <Corner />
            {colLetters.map(l => <ColCell key={l} $sel={l === 'B'}>{l === 'M' ? '' : l}</ColCell>)}
          </ColHead>
          <Row $h={52}>
            <RowHead $end="bottom">1</RowHead>
            <Banner>
              <svg width="37" height="37" viewBox="0 0 40 40">
                <path d="M0 0h7l12.500 12L32 0h7.500v31h-7V10L19.500 22 7 10v21H0z" fill="#050505" />
                <defs><linearGradient id="sw" x1="0" x2="1"><stop offset="0" stopColor="#4a5200" /><stop offset=".65" stopColor="#7d8a00" /><stop offset="1" stopColor="#dcff00" /></linearGradient></defs>
                <path d="M0 34h39v5H2z" fill="url(#sw)" />
              </svg>
              <BannerTitle>Cadastros Gerais</BannerTitle>
            </Banner>
          </Row>
          <Row $h={7}><RowHead /><Band /></Row>
          <Row $h={6}>
            <RowHead $bare />
            {colLetters.map(l => <Cell key={l} />)}
          </Row>
          {numbered.map(n => (
            <Row key={n} $h={n === 24 ? 6 : 19}>
              <RowHead $sel={n === 18}>{n === 4 ? <Lift $dy={-3}>4</Lift> : n}</RowHead>
              {colLetters.map((l, i) => {
                const c = rowMap[n]?.[i];
                return c
                  ? <Cell key={l} $v={c.v} $fs={c.fs} $ls={c.ls}><Lift $dy={c.dy}>{c.t}</Lift></Cell>
                  : <Cell key={l} />;
              })}
            </Row>
          ))}
          <RangeBox>
            PR066
            <Handle $x="l" $y="t" /><Handle $x="r" $y="t" /><Handle $x="l" $y="b" /><Handle $x="r" $y="b" />
          </RangeBox>
          <EditBox>
            <EditLine>=PROCV(<RefText>B16</RefText>;Produtos!B6:G66;4;FALSO<Caret />)</EditLine>
          </EditBox>
          <Tip>PROCV(valor_procurado; matriz_tabela; núm_índice_coluna; <TipStrong>[procurar_intervalo]</TipStrong>)</Tip>
        </SheetArea>
        <VScroll>
          <ScrollBtn><svg width="7" height="4" viewBox="0 0 7 4"><path d="M0 4h7L3.500 0z" fill="#666" /></svg></ScrollBtn>
          <VThumb />
          <VTrack />
          <ScrollBtn><svg width="7" height="4" viewBox="0 0 7 4"><path d="M0 0h7L3.500 4z" fill="#666" /></svg></ScrollBtn>
        </VScroll>
      </SheetWrap>

      <TabBar>
        <TabNav>
          <svg width="4" height="7" viewBox="0 0 4 7"><path d="M4 0v7L0 3.500z" fill="#b8b8b8" /></svg>
          <svg width="4" height="7" viewBox="0 0 4 7"><path d="M0 0v7l4-3.500z" fill="#b8b8b8" /></svg>
        </TabNav>
        <SheetTab $w={59}>Menu</SheetTab>
        <SheetTab $w={80}>Produtos</SheetTab>
        <SheetTab $w={97}>Vendedores</SheetTab>
        <SheetTab $w={69}>Vendas</SheetTab>
        <SheetTab $w={85}>Consultas</SheetTab>
        <ActiveTab>Cadastros Auxiliares</ActiveTab>
        <AddSheet>
          <svg width="16" height="16" viewBox="0 0 16 16" fill="none" stroke="#c2c2c2"><circle cx="8" cy="8" r="7.500" /><path d="M8 4v8M4 8h8" strokeWidth="1.600" /></svg>
        </AddSheet>
        <HScrollZone>
          <DotGrip><svg width="3" height="12" viewBox="0 0 3 12"><path d="M0 0h3v2H0zM0 5h3v2H0zM0 10h3v2H0z" fill="#a8a8a8" /></svg></DotGrip>
          <ScrollBtn><svg width="4" height="7" viewBox="0 0 4 7"><path d="M4 0v7L0 3.500z" fill="#555" /></svg></ScrollBtn>
          <HThumb />
          <HTrack />
          <ScrollBtn><svg width="4" height="7" viewBox="0 0 4 7"><path d="M0 0v7l4-3.500z" fill="#555" /></svg></ScrollBtn>
        </HScrollZone>
      </TabBar>

      <StatusBar>
        Edita
        <StatusRight>
          <ViewBtn $mr={28}><svg width="13" height="13" viewBox="0 0 13 13" fill="none" stroke="#a8a8a8"><path d="M.5.500h12v12H.5zM.5 4.500h12M.5 8.500h12M4.500.5v12M8.500.5v12" /></svg></ViewBtn>
          <ViewBtn $mr={27}><svg width="13" height="13" viewBox="0 0 13 13" fill="none" stroke="#a8a8a8"><path d="M.5.500h12v12H.5zM3 3.500h7M3 6.500h7M3 9.500h7" /></svg></ViewBtn>
          <ViewBtn $mr={19}><svg width="13" height="13" viewBox="0 0 13 13" fill="none" stroke="#a8a8a8"><path d="M.5.500h12v12H.5zM.5 8h6V.5" /></svg></ViewBtn>
          <svg width="10" height="10" viewBox="0 0 10 10"><path d="M2 5h6" stroke="#a8a8a8" /></svg>
          <Zoom />
          <svg width="10" height="10" viewBox="0 0 10 10"><path d="M1 5h8M5 1v8" stroke="#a8a8a8" /></svg>
          <ZoomPct>100%</ZoomPct>
        </StatusRight>
      </StatusBar>

      <Taskbar>
        <StartBtn>
          <svg width="16" height="16" viewBox="0 0 16 16"><path d="M0 2.200 6.800 1.200V7.500H0zM7.600 1.100 16 0v7.500H7.600zM0 8.300h6.800v6.500L0 13.800zM7.600 8.300H16V16l-8.400-1.100z" fill="#0a0a0a" /></svg>
        </StartBtn>
        <Search>
          <svg width="16" height="16" viewBox="0 0 16 16" fill="none" stroke="#222"><circle cx="9.700" cy="6.300" r="5.300" /><path d="M5.800 10.200 1 15" /></svg>
          Pesquisar
          <SearchArt width="78" height="40" viewBox="0 0 78 40" fill="none">
            <path d="M2 32h76v8H2z" fill="#e8b98a" />
            <rect x="12" y="24" width="9" height="9" rx="1" fill="#f4ecd8" stroke="#c9b894" strokeWidth=".5" />
            <path d="M16.500 16c1.800 2.500 1.800 5 0 7.500-1.800-2.500-1.800-5 0-7.500z" fill="#f08a1d" />
            <path d="M26 22h12l-1 11H27z" fill="#cf7d34" />
            <path d="M32 22c-2-6-5-9-9-12 3 1 6 3 7 6-1-5-1-9 0-14 2 5 3 9 2 14 1-3 4-6 9-7-3 3-6 6-8 13z" fill="#5fae2c" />
            <path d="M55 7l14 3v21" stroke="#6e6e60" strokeWidth="1.500" /><path d="M62 31h13v2H62z" fill="#3c3c34" />
            <path d="M50 5l7 2 1 18c-6 1-13-1-16-4 3-2 6-9 8-16z" fill="#55554a" />
          </SearchArt>
        </Search>
        <Tasks>
          <TaskSlot $w={48}>
            <svg width="16" height="17" viewBox="0 0 16 17" fill="none" stroke="#222"><path d="M0 1.500h10M0 15.500h10M1.500 4.500h7v8h-7zM13 1h3v3h-3zM13 6h3v5h-3zM13 13h3v3h-3z" /></svg>
          </TaskSlot>
          <TaskSlot $w={52}>
            <svg width="25" height="25" viewBox="0 0 25 25"><path d="M18 0 25 3.200v18.600L18 25 7 14.500 2.500 18 0 16.500 4.500 12.500 0 8.500 2.500 7 7 10.500z" fill="#1b8ad6" /><path d="M18 6.500v12L10.500 12.500z" fill="#f0ecf5" /></svg>
          </TaskSlot>
          <TaskSlot $w={49}>
            <svg width="26" height="26" viewBox="0 0 26 26"><path d="M8 1h18v24H8z" fill="#2b7cd3" /><path d="M8 1h18v6H8z" fill="#41a5ee" /><path d="M8 13h18v6H8z" fill="#185abd" /><path d="M8 19h18v6H8z" fill="#103f91" /><rect y="6" width="14" height="14" rx="1" fill="#185abd" /><path d="M2.500 9l1.500 8 2-6 1.500 0 1.500 6 1.800-8" fill="none" stroke="#fff" strokeWidth="1.300" /></svg>
          </TaskSlot>
          <TaskSlot $w={49} $open $l={4} $r={5}>
            <svg width="28" height="30" viewBox="0 0 28 30">
              <circle cx="12" cy="12" r="12" fill="#e33b2e" /><path d="M12 12 1.600 18A12 12 0 0 0 15 23.600z" fill="#2ba24c" /><path d="M12 12h11.800A12 12 0 0 1 15 23.600z" fill="#fbc02d" /><circle cx="12" cy="12" r="5" fill="#2f7de0" stroke="#fff" strokeWidth="1.500" />
              <circle cx="20" cy="21" r="8" fill="#1a5fa8" />
              <text x="20" y="25" fontFamily="Open Sans, sans-serif" fontSize="10" fontWeight="700" fill="#fff" textAnchor="middle">G</text>
            </svg>
          </TaskSlot>
          <TaskSlot $w={50} $on $open>
            <svg width="26" height="24" viewBox="0 0 26 24"><path d="M8 0h18v24H8z" fill="#21a366" /><path d="M17 0h9v6h-9z" fill="#33c481" /><path d="M17 12h9v6h-9z" fill="#107c41" /><path d="M8 12h9v12H8z" fill="#185c37" /><rect y="5" width="14" height="14" rx="1" fill="#107c41" /><path d="M4 8.500l5.500 7.500M9.500 8.500 4 16" stroke="#fff" strokeWidth="1.800" /></svg>
          </TaskSlot>
          <TaskSlot $w={44} $open $l={3} $r={2}>
            <svg width="22" height="21" viewBox="0 0 22 21"><path d="M0 2h8l2 3h12v15H0z" fill="#f6c443" /><path d="M0 7h22v13H0z" fill="#ffd966" /><path d="M6 12h10v8H6z" fill="#2f8fd8" /><path d="M8.500 16h5v4h-5z" fill="#e8f2fb" /></svg>
          </TaskSlot>
        </Tasks>
        <Tray>
          <Ticker>
            <CoinWrap>
              <svg width="24" height="26" viewBox="0 0 24 26">
                <ellipse cx="12" cy="5" rx="8" ry="3.500" fill="#f7a234" /><path d="M1 9c3-1 5-1 11-1s8 0 11 1c0 3-5 4-11 4S1 12 1 9z" fill="#f58d1c" /><ellipse cx="12" cy="15" rx="9" ry="3.500" fill="#f7a234" />
                <path d="M8 24l4-3.500 4 3.500" fill="none" stroke="#6ab52c" strokeWidth="2" />
              </svg>
            </CoinWrap>
            GBP/BRL<Gain>+0,86%</Gain>
          </Ticker>
          <TraySlot $w={44} $pl={18}>
            <svg width="12" height="7" viewBox="0 0 12 7"><path d="M1 6.500l5-5 5 5" fill="none" stroke="#111" strokeWidth="1.200" /></svg>
          </TraySlot>
          <TraySlot $w={24}>
            <svg width="18" height="18" viewBox="0 0 18 18" fill="none" stroke="#111"><path d="M1 4l14-3v11l-14 1z" /><path d="M6 9a3 3 0 0 1 5-2M11 5v2H9" /><circle cx="13" cy="13.500" r="3.700" fill="#2f6fd0" stroke="none" /></svg>
          </TraySlot>
          <TraySlot $w={24}>
            <svg width="16" height="10" viewBox="0 0 16 10"><rect x=".5" y=".5" width="13" height="9" rx="1" fill="none" stroke="#111" /><path d="M2 2h9v6H2zM14.500 3.500H16v3h-1.500z" fill="#111" /></svg>
          </TraySlot>
          <TraySlot $w={24}>
            <svg width="14" height="18" viewBox="0 0 14 18" fill="none" stroke="#111"><path d="M2 4.500h7v9H2zM9 8l4-2.500v7L9 10M3 1.500h5M3 16.500h5" /></svg>
          </TraySlot>
          <TraySlot $w={24}>
            <svg width="16" height="15" viewBox="0 0 16 15" fill="none" stroke="#111"><path d="M1 9a11 11 0 0 1 14-8M3 11a8 8 0 0 1 11-6M6 12a5 5 0 0 1 7-3" strokeDasharray="2 .6" /><circle cx="13" cy="13" r="1.200" fill="#111" /></svg>
          </TraySlot>
          <TraySlot $w={22}>
            <svg width="16" height="14" viewBox="0 0 16 14" fill="none" stroke="#111"><path d="M1 4.500h3L8 1v12L4 9.500H1z" /><path d="M10.500 4.500a3.500 3.500 0 0 1 0 5M12.500 2.500a6.500 6.500 0 0 1 0 9" /></svg>
          </TraySlot>
          <Clock>23:42<br />23/02/2024</Clock>
          <Notify>
            <svg width="16" height="15" viewBox="0 0 16 15"><path d="M0 0h16v11H6l-3 3v-3H0z" fill="#111" /><path d="M3 3h10M3 5.500h10M3 8h7" stroke="#fff" /></svg>
            <NotifyBadge>1</NotifyBadge>
          </Notify>
        </Tray>
      </Taskbar>
    </Page>
  );
};

export default App;
